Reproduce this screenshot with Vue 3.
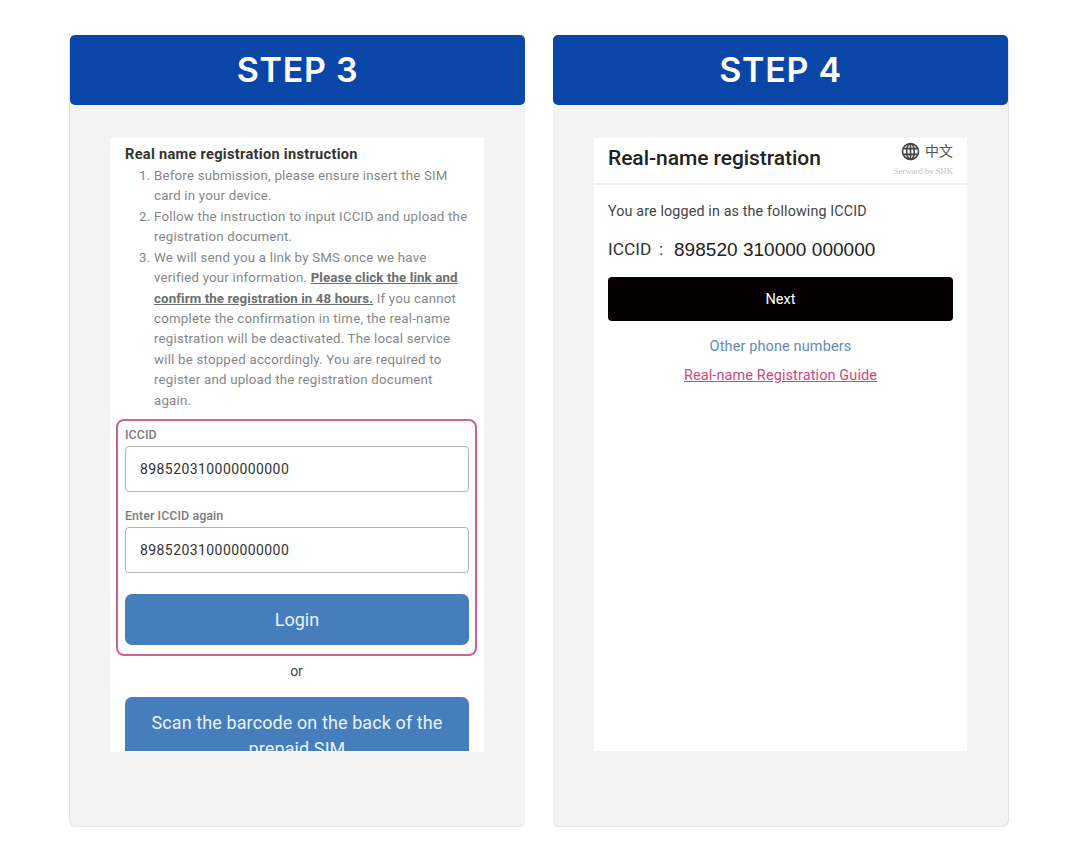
<script setup>
const steps = [
  { line: 'Before submission, please ensure insert the SIM', rest: 'card in your device.' },
  { line: 'Follow the instruction to input ICCID and upload the', rest: 'registration document.' },
]
const fields = [
  { label: 'ICCID', value: '898520310000000000' },
  { label: 'Enter ICCID again', value: '898520310000000000' },
]
</script>

<template>
  <main class="page">
    <section class="card left">
      <h2 class="step">STEP 3</h2>
      <div class="phone phone-login">
        <h3 class="heading">Real name registration instruction</h3>
        <ol class="list">
          <li v-for="s in steps" :key="s.line">{{ s.line }}<br />{{ s.rest }}</li>
          <li>
            We will send you a link by SMS once we have<br />
            verified your information. <b>Please click the link and<br />
            confirm the registration in 48 hours.</b> If you cannot<br />
            complete the confirmation in time, the real-name<br />
            registration will be deactivated. The local service<br />
            will be stopped accordingly. You are required to<br />
            register and upload the registration document<br />
            again.
          </li>
        </ol>
        <div class="frame">
          <div v-for="f in fields" :key="f.label" class="field">
            <div class="label">{{ f.label }}</div>
            <div class="input"><span>{{ f.value }}</span></div>
          </div>
          <div class="btn login"><span>Login</span></div>
        </div>
        <div class="or">or</div>
        <div class="btn scan">Scan the barcode on the back of the<br />prepaid SIM</div>
      </div>
    </section>

    <section class="card right">
      <h2 class="step">STEP 4</h2>
      <div class="phone phone-next">
        <header class="bar">
          <h3 class="title">Real-name registration</h3>
          <div class="lang">
            <div class="lang-row">
              <svg width="19" height="19" viewBox="0 0 19 19" fill="none" stroke="#444" stroke-width="1.6">
                <circle cx="9.5" cy="9.5" r="8" />
                <ellipse cx="9.5" cy="9.5" rx="3.8" ry="8" />
                <path d="M9.5 1.5V17.5M2.3 6.6H16.7M2.3 12.4H16.7" />
              </svg>
              <span class="zh">中文</span>
            </div>
            <div class="by">Serward by SHK</div>
          </div>
        </header>
        <p class="logged"><span>You are logged in as the following ICCID</span></p>
        <p class="iccid"><span class="key">ICCID</span><span class="colon">:</span><span class="num">898520 310000 000000</span></p>
        <div class="next">Next</div>
        <div class="other"><span>Other phone numbers</span></div>
        <div class="guide"><span>Real-name Registration Guide</span></div>
      </div>
    </section>
  </main>
</template>

<style>
body { background: #fff; }
</style>

<style scoped>
* { box-sizing: border-box; }
.page {
  width: 1078px;
  height: 862px;
  padding: 35px 70px 0;
  display: flex;
  gap: 28px;
  font-family: Roboto, "Noto Sans CJK SC", sans-serif;
  white-space: nowrap;
  overflow: hidden;
}
h2, h3, p, ol { margin: 0; padding: 0; }
.card {
  flex: none;
  width: 455px;
  height: 792px;
  background: #f3f3f3;
  border-radius: 6px;
  border-bottom: 1px solid #e6e6e6;
}
.left { box-shadow: -0.5px 0 0 #c8c8c8; }
.right { box-shadow: 0.5px 0 0 #c8c8c8; }
.step {
  height: 70px;
  line-height: 70px;
  border-radius: 5px;
  background: #0a46a8;
  color: #fff;
  text-align: center;
  font-family: Inter, sans-serif;
  font-size: 34px;
  font-weight: 600;
  letter-spacing: 0.7px;
}
.phone {
  margin: 33px 0 0 40px;
  width: 374px;
  height: 613.5px;
  background: #fff;
  overflow: hidden;
}
.phone-login { padding: 7px 7px 0 6px; border-bottom: 1px solid #fff; }
.heading {
  margin-left: 9px;
  height: 21px;
  line-height: 19px;
  font-size: 14.6px;
  letter-spacing: 0.29px;
  font-weight: 700;
  color: #333;
}
.list {
  margin-left: 38px;
  line-height: 20.42px;
  font-size: 13.3px;
  letter-spacing: 0.2px;
  color: #858789;
}
.list b { font-weight: 700; letter-spacing: 0.1px; color: #6c6e70; text-decoration: underline; }
.frame {
  margin-top: 8px;
  width: 361px;
  height: 237px;
  border: 2px solid #d0608f;
  border-radius: 8px;
  padding: 4px 6px 0 7px;
}
.field { height: 81px; }
.label {
  height: 21px;
  line-height: 19px;
  font-size: 12.4px;
  letter-spacing: 0.08px;
  font-weight: 500;
  color: #7b7b7b;
}
.input {
  height: 46px;
  padding-left: 14px;
  border: 1.5px solid #b2b2b2;
  border-radius: 4px;
  line-height: 44px;
  font-size: 14px;
  letter-spacing: 0.42px;
  color: #333;
}
.btn {
  background: #467dbd;
  color: #e6f4ff;
  text-align: center;
  border-radius: 7px;
}
.login { margin-top: 7px; height: 51px; line-height: 52px; font-size: 18px; }
.or { height: 41px; line-height: 31px; text-align: center; font-size: 14px; color: #444; }
.scan {
  margin: 0 8px 0 9px;
  height: 90px;
  padding-top: 13px;
  font-size: 18px;
  letter-spacing: 0.1px;
  line-height: 26px;
}
.phone-next { margin-left: 41px; width: 373px; height: 612.5px; }
.bar {
  height: 47px;
  border-bottom: 2px solid #f0f0f0;
  padding: 0 14px;
  display: flex;
  justify-content: space-between;
}
.title { line-height: 41px; font-size: 21px; font-weight: 500; letter-spacing: -0.05px; color: #222; }
.lang { display: flex; flex-direction: column; align-items: flex-end; }
.lang-row { height: 27px; display: flex; align-items: center; gap: 5px; }
.zh { font-size: 14px; line-height: 20px; margin-top: -2px; color: #555; }
.by { font-family: "Liberation Serif", serif; font-size: 9px; letter-spacing: -0.15px; line-height: 12px; color: #c4c4c4; }
.logged { margin: 15px 0 0 14px; height: 22px; line-height: 22px; font-size: 14.3px; letter-spacing: 0.14px; color: #444; }
.iccid { margin: 16px 0 0 14px; height: 24px; line-height: 24px; display: flex; color: #333; }
.key { width: 51px; font-size: 17.3px; line-height: 23px; }
.colon { width: 15px; font-size: 17px; line-height: 22px; }
.num { font-family: "Liberation Sans", Arial, sans-serif; font-size: 19px; letter-spacing: 0.03px; color: #222; }
.next {
  margin: 14.5px 14px 0;
  height: 44.5px;
  line-height: 45px;
  border-radius: 4px;
  background: #050000;
  color: #fff;
  text-align: center;
  font-size: 14.6px;
}
.other { margin-top: 15px; height: 22px; line-height: 22px; text-align: center; font-size: 14.5px; letter-spacing: 0.12px; color: #5f8bbe; }
.guide { margin-top: 7px; height: 22px; line-height: 22px; text-align: center; font-size: 14.5px; letter-spacing: 0.1px; color: #cf4880; }
.guide span { text-decoration: underline; }
</style>
